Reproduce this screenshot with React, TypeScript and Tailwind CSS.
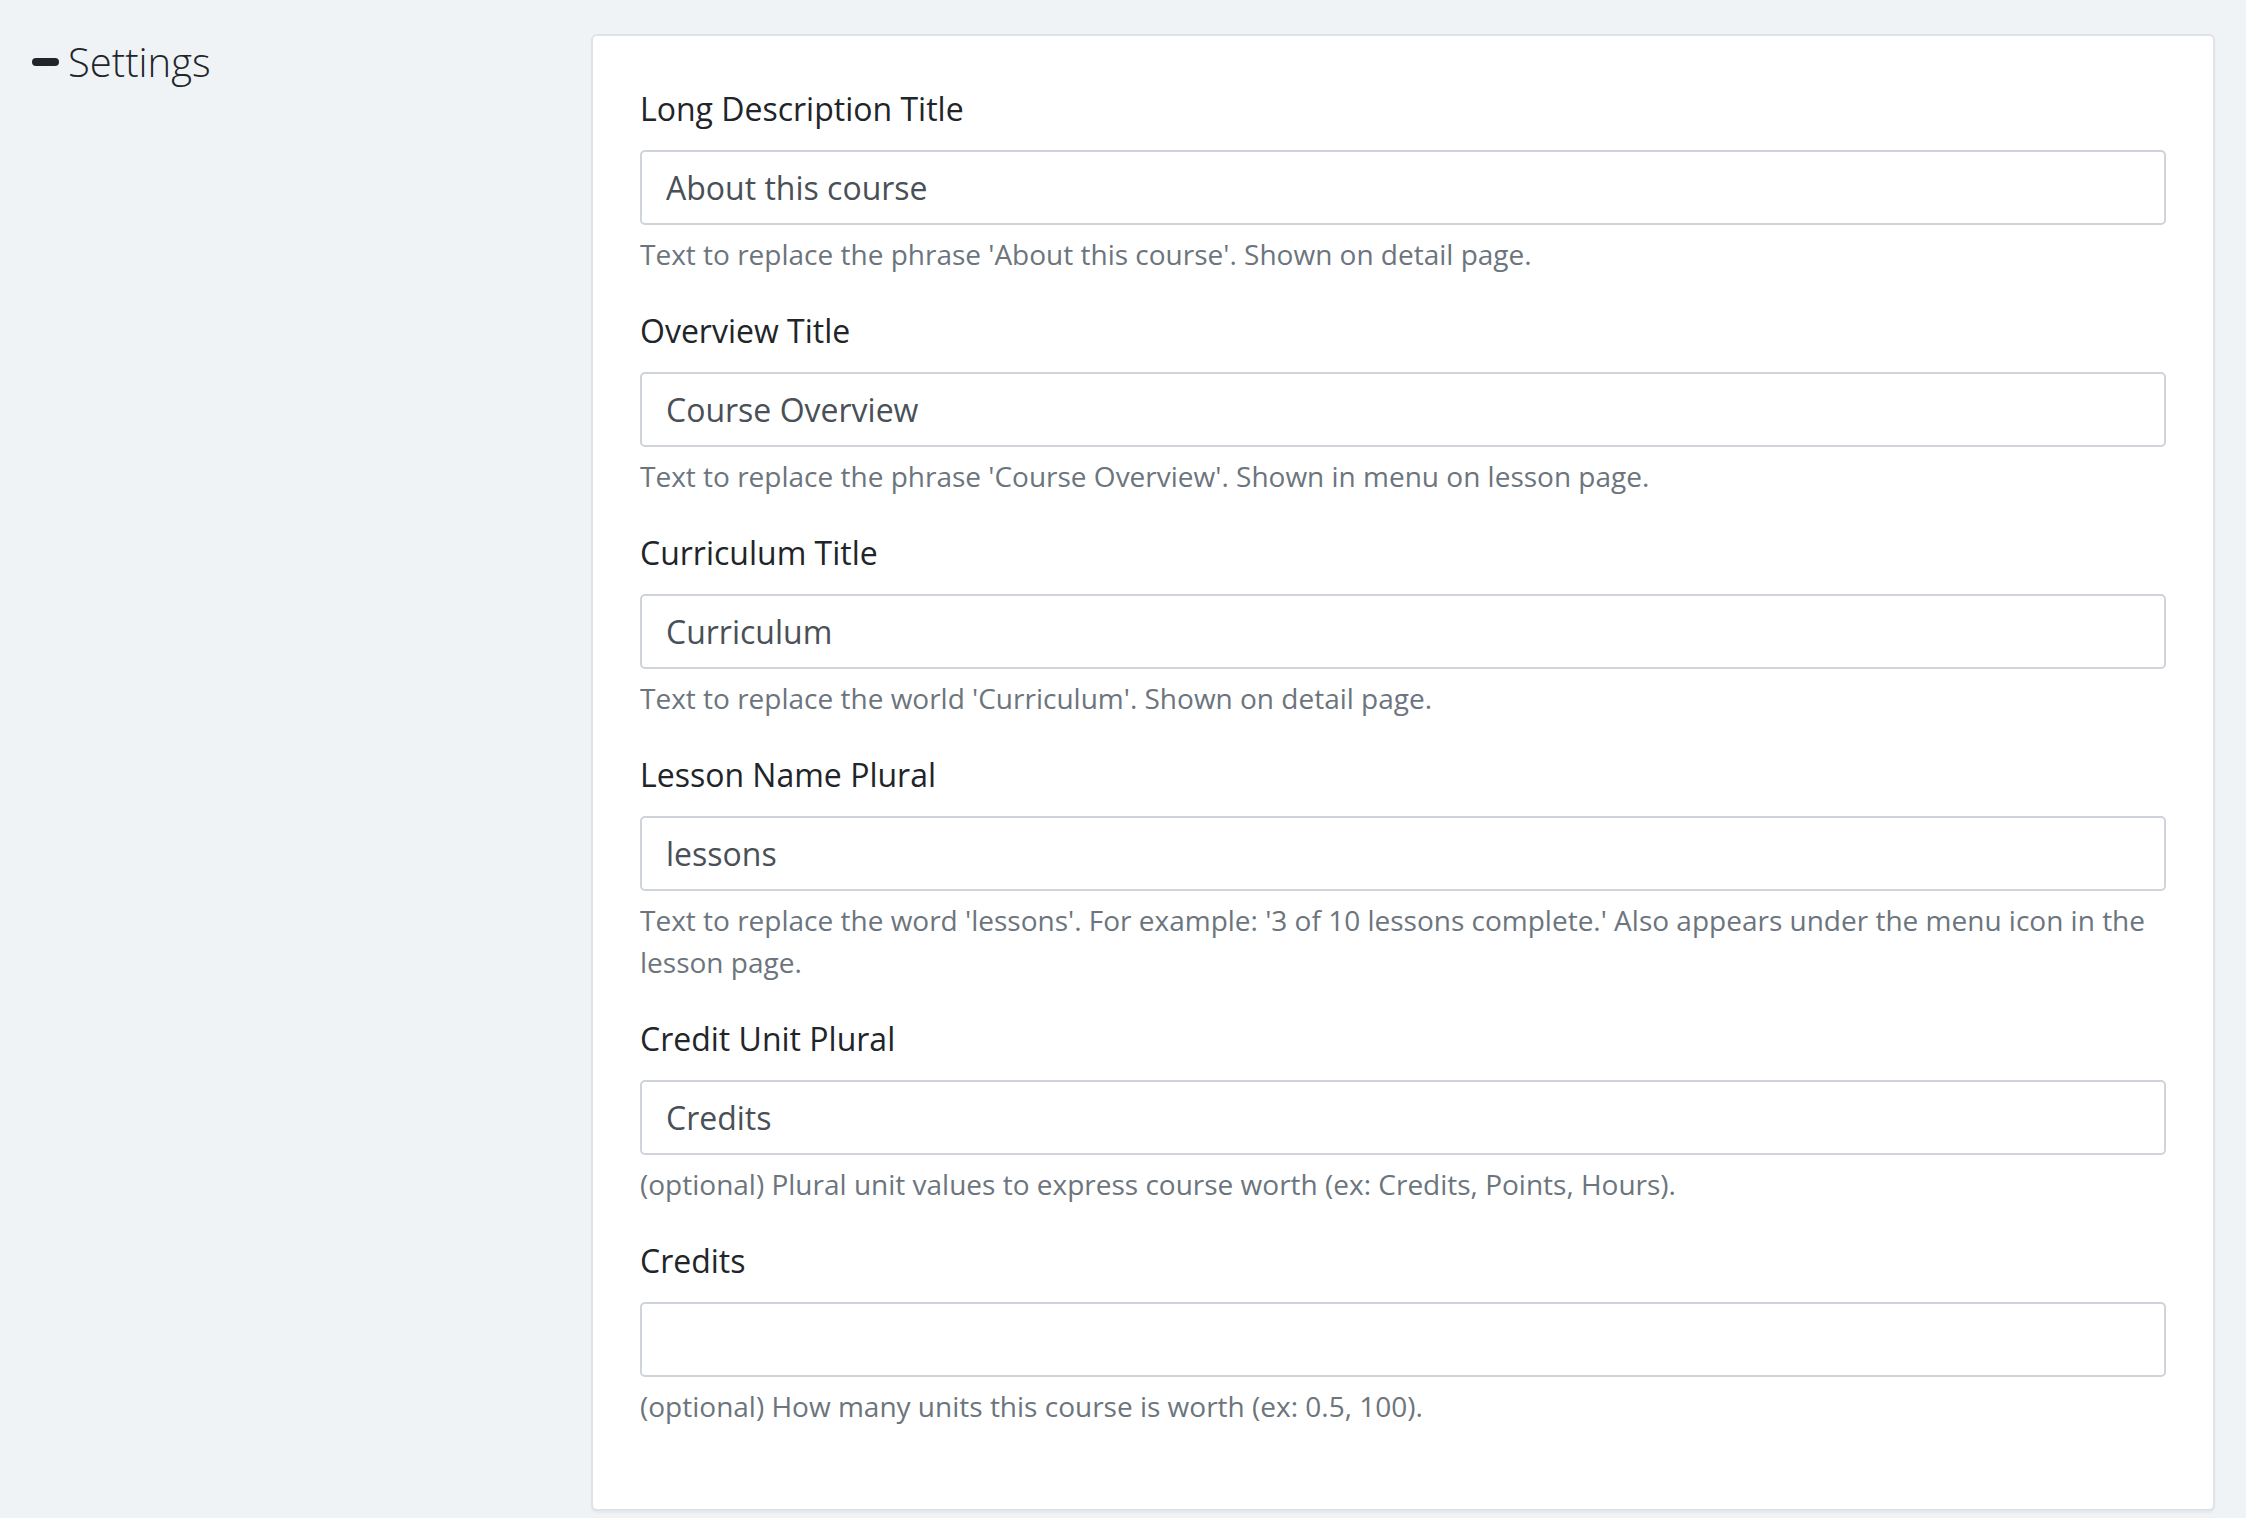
const fields = [
  {
    label: "Long Description Title",
    value: "About this course",
    help: "Text to replace the phrase 'About this course'. Shown on detail page.",
  },
  {
    label: "Overview Title",
    value: "Course Overview",
    help: "Text to replace the phrase 'Course Overview'. Shown in menu on lesson page.",
  },
  {
    label: "Curriculum Title",
    value: "Curriculum",
    help: "Text to replace the world 'Curriculum'. Shown on detail page.",
  },
  {
    label: "Lesson Name Plural",
    value: "lessons",
    help: "Text to replace the word 'lessons'. For example: '3 of 10 lessons complete.' Also appears under the menu icon in the lesson page.",
  },
  {
    label: "Credit Unit Plural",
    value: "Credits",
    help: "(optional) Plural unit values to express course worth (ex: Credits, Points, Hours).",
  },
  {
    label: "Credits",
    value: "",
    help: "(optional) How many units this course is worth (ex: 0.5, 100).",
  },
];

function Field({ label, value, help }: { label: string; value: string; help: string }) {
  return (
    <div className="mb-[32px] last:mb-[32px]">
      <label className="block text-[32px] leading-[48px] text-[#212529]">{label}</label>
      <input
        type="text"
        defaultValue={value}
        className="mt-[17px] block h-[75px] w-full rounded-[5px] border-2 border-[#ced4da] bg-white px-[24px] text-[32px] text-[#495057] outline-none"
      />
      <p className="mt-[8px] text-[28px] leading-[42px] text-[#6c757d]">{help}</p>
    </div>
  );
}

export default function App() {
  return (
    <div
      className="flex min-h-[1518px] bg-[#eff3f6] pt-[34px] pr-[31px]"
      style={{ fontFamily: '"Open Sans", "Noto Sans", sans-serif' }}
    >
      <div className="w-[591px] shrink-0 pl-[32px]">
        <h2 className="flex items-center gap-[9px] text-[40px] font-light leading-[56px] text-[#212529]">
          <span className="block h-[8px] w-[27px] rounded-full bg-[#212529]" />
          Settings
        </h2>
      </div>
      <div className="flex-1 self-start">
        <div className="rounded-[6px] border-2 border-[#dfe2e6] bg-white px-[47px] pt-[49px] pb-[50px] shadow-[0_2px_2px_rgba(0,0,0,0.04)]">
          {fields.map((f) => (
            <Field key={f.label} {...f} />
          ))}
        </div>
      </div>
    </div>
  );
}
